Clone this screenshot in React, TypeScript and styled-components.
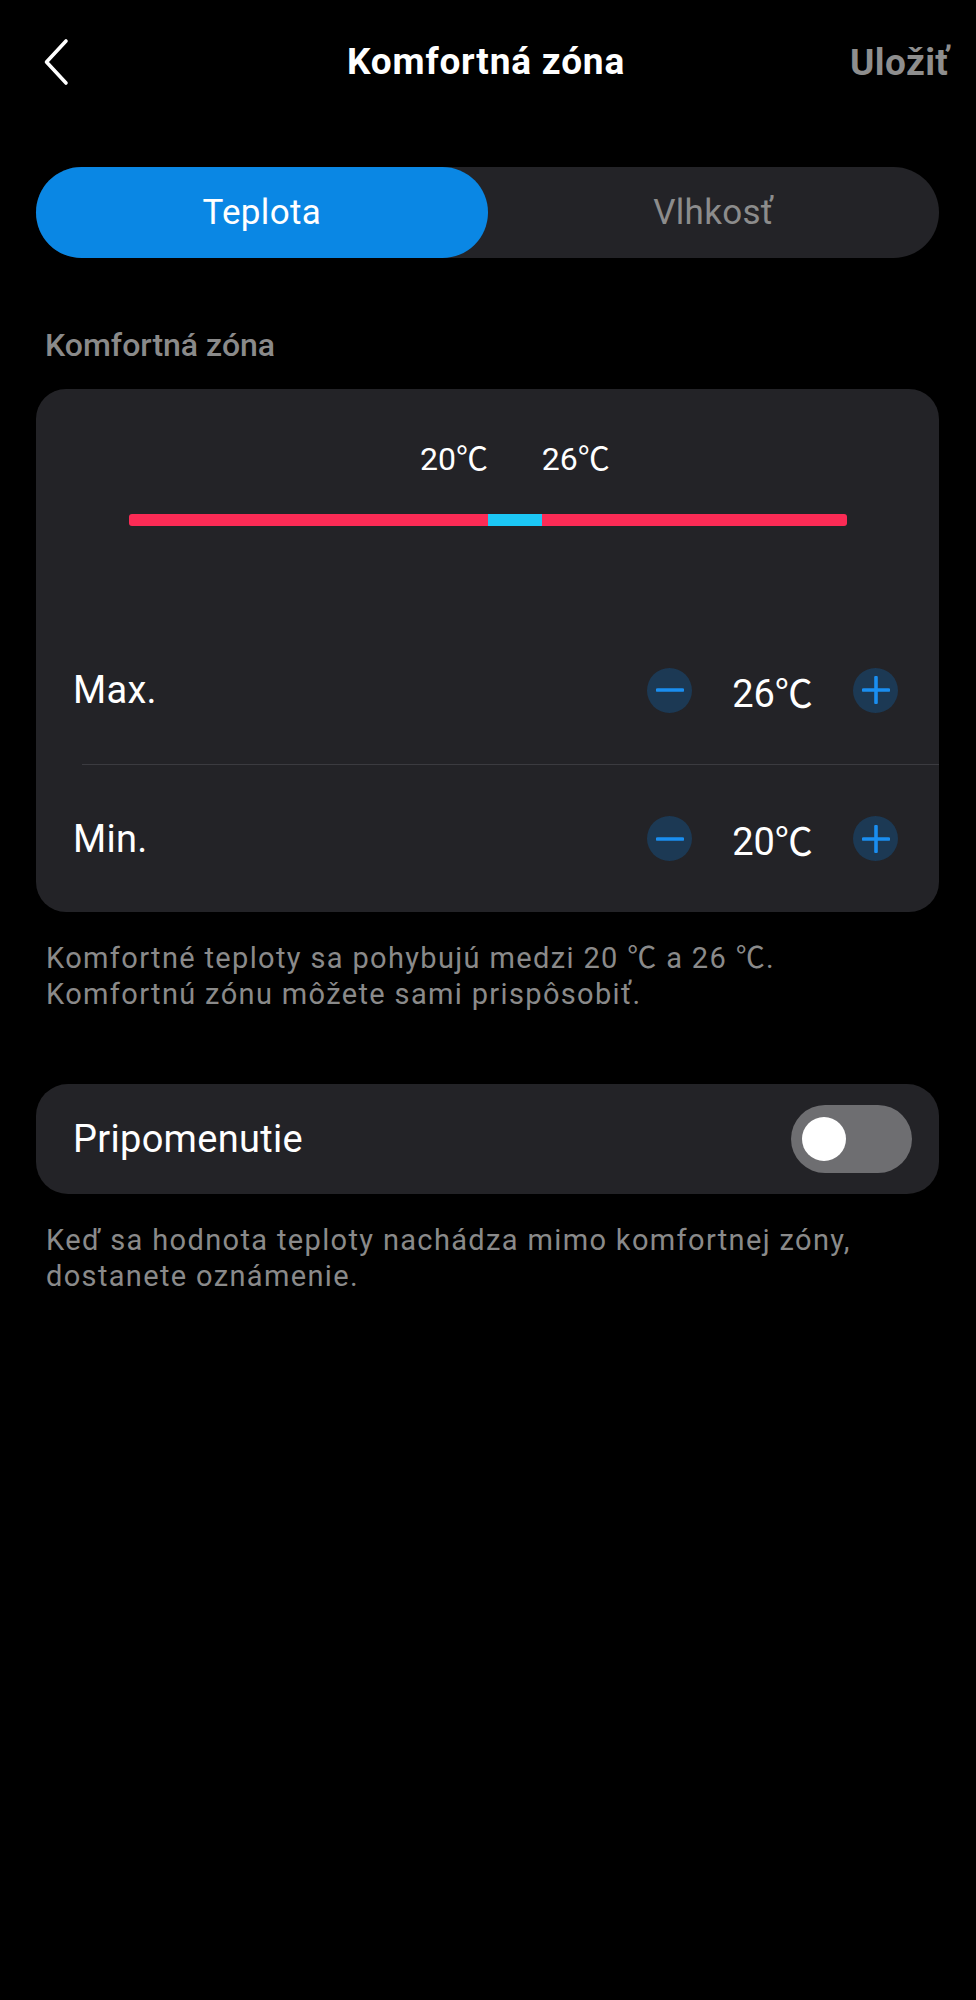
import React, { useState } from 'react';
import styled, { createGlobalStyle } from 'styled-components';

const GlobalStyle = createGlobalStyle`
  body {
    margin: 0;
    background: #000;
    font-family: Roboto, "Noto Sans CJK SC", "DejaVu Sans", sans-serif;
    -webkit-font-smoothing: antialiased;
  }
`;

const Page = styled.div`
  width: 976px;
  min-height: 2000px;
  background: #000;
  color: #fff;
`;

const Header = styled.header`
  display: grid;
  grid-template-columns: 1fr auto 1fr;
  align-items: center;
  height: 124px;
  padding: 0 27px;
`;

const BackButton = styled.button`
  justify-self: start;
  display: flex;
  align-items: center;
  margin-left: 16px;
  padding: 0;
  border: 0;
  background: none;
  cursor: pointer;
`;

const Title = styled.h1`
  margin: 0 0 0 -4px;
  font-size: 37px;
  font-weight: 700;
  letter-spacing: 0.8px;
  line-height: 44px;
  color: #fff;
`;

const SaveButton = styled.button`
  justify-self: end;
  padding: 0;
  border: 0;
  background: none;
  font-family: inherit;
  font-size: 37px;
  font-weight: 700;
  letter-spacing: 0.4px;
  color: #8e8e8e;
`;

const Content = styled.main`
  padding: 0 37px 0 36px;
`;

const Segmented = styled.div`
  display: grid;
  grid-template-columns: 1fr 1fr;
  height: 91px;
  margin-top: 43px;
  border-radius: 46px;
  background: #232327;
`;

const Tab = styled.button<{ $active?: boolean }>`
  display: flex;
  align-items: center;
  justify-content: center;
  border: 0;
  border-radius: 46px;
  font-family: inherit;
  font-size: 35px;
  letter-spacing: 0.3px;
  background: ${p => (p.$active ? '#0a87e4' : 'transparent')};
  color: ${p => (p.$active ? '#fff' : '#8c8c8c')};
  cursor: pointer;
`;

const SectionLabel = styled.div`
  margin: 68px 0 25px;
  padding-left: 9px;
  font-size: 32px;
  font-weight: 500;
  line-height: 38px;
  color: #8a8a8a;
`;

const Card = styled.section`
  background: #232327;
  border-radius: 30px;
  overflow: hidden;
`;

const RangeCard = styled(Card)`
  padding-top: 51px;
`;

const RangeLabels = styled.div`
  display: grid;
  margin: 0 92px 0 93px;
  font-size: 32px;
  line-height: 38px;
  color: #fff;
`;

const RangeLabel = styled.span<{ $align: 'left' | 'right' }>`
  text-align: ${p => p.$align};
  white-space: nowrap;
`;

const Bar = styled.div`
  height: 12px;
  margin: 36px 92px 0 93px;
  border-radius: 3px;
`;

const Rows = styled.div`
  margin-top: 90px;
`;

const Row = styled.div<{ $height: number }>`
  display: flex;
  align-items: center;
  justify-content: space-between;
  height: ${p => p.$height}px;
  padding: 0 41px 0 37px;
`;

const RowLabel = styled.span`
  font-size: 38px;
  letter-spacing: 0.3px;
  color: #fff;
`;

const Divider = styled.div`
  height: 1px;
  margin-left: 46px;
  background: #3b3b40;
`;

const Stepper = styled.div`
  display: flex;
  align-items: center;
`;

const StepButton = styled.button`
  display: flex;
  align-items: center;
  justify-content: center;
  width: 45px;
  height: 45px;
  padding: 0;
  border: 0;
  border-radius: 50%;
  background: #1c3954;
  cursor: pointer;
`;

const StepValue = styled.span`
  width: 161px;
  text-align: center;
  font-size: 38px;
  color: #fff;
`;

const Hint = styled.p`
  margin: 28px 0 0;
  padding-left: 10px;
  font-size: 29px;
  line-height: 36px;
  letter-spacing: 1.35px;
  color: #8a8a8a;
`;

const ToggleCard = styled(Card)`
  display: flex;
  align-items: center;
  justify-content: space-between;
  height: 110px;
  margin-top: 72px;
  padding: 0 27px 0 37px;
  border-radius: 32px;
`;

const Switch = styled.button<{ $on: boolean }>`
  display: flex;
  align-items: center;
  justify-content: ${p => (p.$on ? 'flex-end' : 'flex-start')};
  width: 121px;
  height: 68px;
  padding: 0 11px;
  border: 0;
  border-radius: 34px;
  background: ${p => (p.$on ? '#0a87e4' : '#6e6e71')};
  cursor: pointer;
`;

const Knob = styled.span`
  width: 44px;
  height: 44px;
  border-radius: 50%;
  background: #fff;
`;

const SCALE_MIN = -20;
const SCALE_MAX = 60;

const pct = (v: number) => ((v - SCALE_MIN) / (SCALE_MAX - SCALE_MIN)) * 100;

function ChevronLeft() {
  return (
    <svg width="26" height="48" viewBox="0 0 26 48" fill="none">
      <path d="M23 3 L3.5 24 L23 45" stroke="#fff" strokeWidth="3.6" strokeLinecap="round" strokeLinejoin="round" />
    </svg>
  );
}

function StepIcon({ plus }: { plus?: boolean }) {
  return (
    <svg width="28" height="28" viewBox="0 0 28 28">
      <path d="M1.5 14 H26.5" stroke="#1a8ef0" strokeWidth="3.6" strokeLinecap="round" />
      {plus && <path d="M14 1.5 V26.5" stroke="#1a8ef0" strokeWidth="3.6" strokeLinecap="round" />}
    </svg>
  );
}

function StepRow({ label, value, height, onChange }: { label: string; value: number; height: number; onChange: (v: number) => void }) {
  return (
    <Row $height={height}>
      <RowLabel>{label}</RowLabel>
      <Stepper>
        <StepButton onClick={() => onChange(value - 1)}>
          <StepIcon />
        </StepButton>
        <StepValue>{value}℃</StepValue>
        <StepButton onClick={() => onChange(value + 1)}>
          <StepIcon plus />
        </StepButton>
      </Stepper>
    </Row>
  );
}

export default function App() {
  const [tab, setTab] = useState(0);
  const [min, setMin] = useState(20);
  const [max, setMax] = useState(26);
  const [remind, setRemind] = useState(false);

  const from = pct(min);
  const to = pct(max);

  return (
    <Page>
      <GlobalStyle />
      <Header>
        <BackButton>
          <ChevronLeft />
        </BackButton>
        <Title>Komfortná zóna</Title>
        <SaveButton>Uložiť</SaveButton>
      </Header>

      <Content>
        <Segmented>
          <Tab $active={tab === 0} onClick={() => setTab(0)}>Teplota</Tab>
          <Tab $active={tab === 1} onClick={() => setTab(1)}>Vlhkosť</Tab>
        </Segmented>

        <SectionLabel>Komfortná zóna</SectionLabel>

        <RangeCard>
          <RangeLabels style={{ gridTemplateColumns: `${from}% ${to - from}% 1fr` }}>
            <RangeLabel $align="right">{min}℃</RangeLabel>
            <span />
            <RangeLabel $align="left">{max}℃</RangeLabel>
          </RangeLabels>
          <Bar
            style={{
              background: `linear-gradient(to right, #fb2b55 0 ${from}%, #1cc8f6 ${from}% ${to}%, #fb2b55 ${to}% 100%)`,
            }}
          />
          <Rows>
            <StepRow label="Max." value={max} height={148} onChange={setMax} />
            <Divider />
            <StepRow label="Min." value={min} height={147} onChange={setMin} />
          </Rows>
        </RangeCard>

        <Hint>
          Komfortné teploty sa pohybujú medzi 20 ℃ a 26 ℃.
          <br />
          Komfortnú zónu môžete sami prispôsobiť.
        </Hint>

        <ToggleCard>
          <RowLabel>Pripomenutie</RowLabel>
          <Switch $on={remind} onClick={() => setRemind(!remind)}>
            <Knob />
          </Switch>
        </ToggleCard>

        <Hint>
          Keď sa hodnota teploty nachádza mimo komfortnej zóny,
          <br />
          dostanete oznámenie.
        </Hint>
      </Content>
    </Page>
  );
}
